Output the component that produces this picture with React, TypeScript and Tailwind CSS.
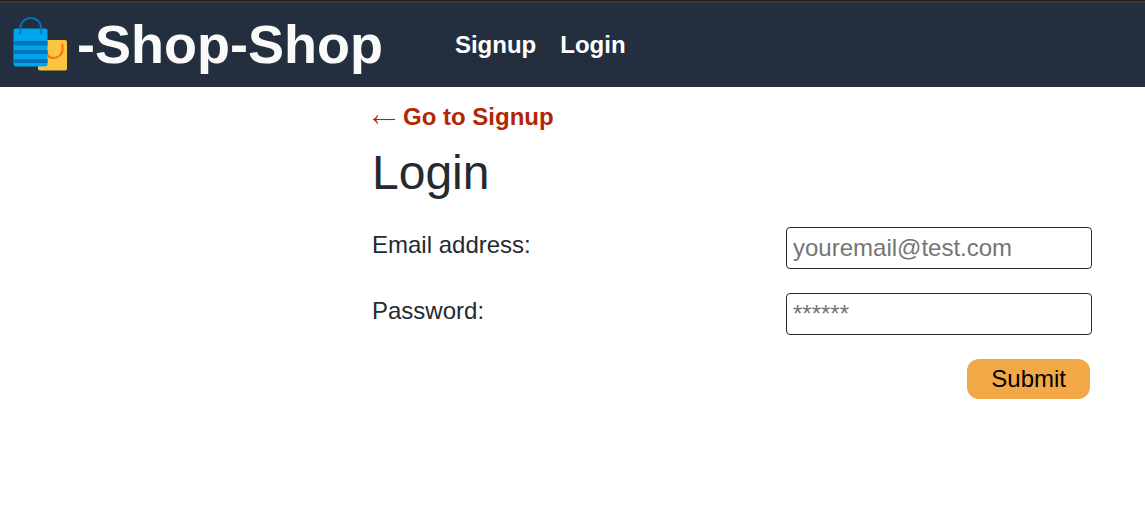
import React from "react";

function ShoppingBags() {
  return (
    <svg viewBox="0 0 56 54" className="h-[54px] w-14 shrink-0" role="img" aria-label="shopping bag">
      <rect x="25" y="23" width="29" height="30.5" rx="2" fill="#fac53f" />
      <path d="M32.500 28v4c0 4.500 3 9 7.500 9 5.500 0 9.500-3.500 9.500-8.500V27.500" fill="none" stroke="#ff6d20" strokeWidth="2" strokeLinecap="round" />
      <rect x="0.5" y="11.5" width="34" height="38" rx="2.5" fill="#00a6ed" />
      <path d="M.5 24h34v4.500H.5zM.5 33h34v4H.5zM.5 42h34v4H.5z" fill="#0074ba" />
      <path d="M7.400 16.500V11a10.400 10 0 0 1 20.800 0v5.500" fill="none" stroke="#0074ba" strokeWidth="1.900" strokeLinecap="round" />
    </svg>
  );
}

function LeftArrow() {
  return (
    <svg viewBox="0 0 24 36" className="h-9 w-6 shrink-0" aria-hidden="true">
      <path d="M3 20.500h20" fill="none" stroke="currentColor" strokeWidth="1.100" />
      <path d="M.5 20.500C2.700 19.500 4.200 18 5.300 16l.9.500c-.6 1.500-1.300 2.700-2.400 4 1.100 1.300 1.800 2.500 2.400 4l-.9.500C4.200 23 2.700 21.500.5 20.500z" fill="currentColor" />
    </svg>
  );
}

function Header() {
  return (
    <>
      <div className="h-[3px] border-t border-[#1f1f1f] bg-[#3c3838]" />
      <header className="flex h-[84px] items-center bg-[#232f3e] pb-0.5 pl-[13px]">
        <h1 className="text-[54px] leading-[60px] font-bold text-[#fafafa]">
          <a href="#home" className="flex items-center">
            <ShoppingBags />
            <span className="ml-2">-Shop-Shop</span>
          </a>
        </h1>
        <nav className="ml-[72px] pt-0.5">
          <ul className="flex list-disc gap-6 text-2xl font-bold text-white marker:text-[#252e30]">
            <li><a href="#signup">Signup</a></li>
            <li><a href="#login">Login</a></li>
          </ul>
        </nav>
      </header>
    </>
  );
}

type FieldProps = { id: string; label: string; type: string; placeholder: string };

function Field({ id, label, type, placeholder }: FieldProps) {
  return (
    <div className="flex items-start justify-between">
      <label htmlFor={id} className="leading-9">{label}</label>
      <input
        id={id}
        name={id}
        type={type}
        placeholder={placeholder}
        className="h-[42px] w-[306px] rounded border border-[#232b30] bg-white px-1.5 placeholder:text-[#757575]"
      />
    </div>
  );
}

export default function App() {
  return (
    <div className="min-h-screen bg-white font-['Liberation_Sans',Arial,sans-serif] text-2xl text-[#232b30]">
      <Header />
      <main className="pt-3 pr-[53px] pl-[372px]">
        <a href="#signup" className="flex gap-[7px] leading-9 font-bold text-[#b12704]">
          <LeftArrow />
          <span>Go to Signup</span>
        </a>
        <h2 className="pt-0.5 text-5xl leading-[72px]">Login</h2>
        <form className="mt-[18px] flex flex-col gap-6" onSubmit={(event) => event.preventDefault()}>
          <Field id="email" label="Email address:" type="email" placeholder="youremail@test.com" />
          <Field id="password" label="Password:" type="password" placeholder="******" />
          <button type="submit" className="mr-0.5 h-10 self-end rounded-xl bg-[#f3a847] px-6 text-black">
            Submit
          </button>
        </form>
      </main>
    </div>
  );
}
